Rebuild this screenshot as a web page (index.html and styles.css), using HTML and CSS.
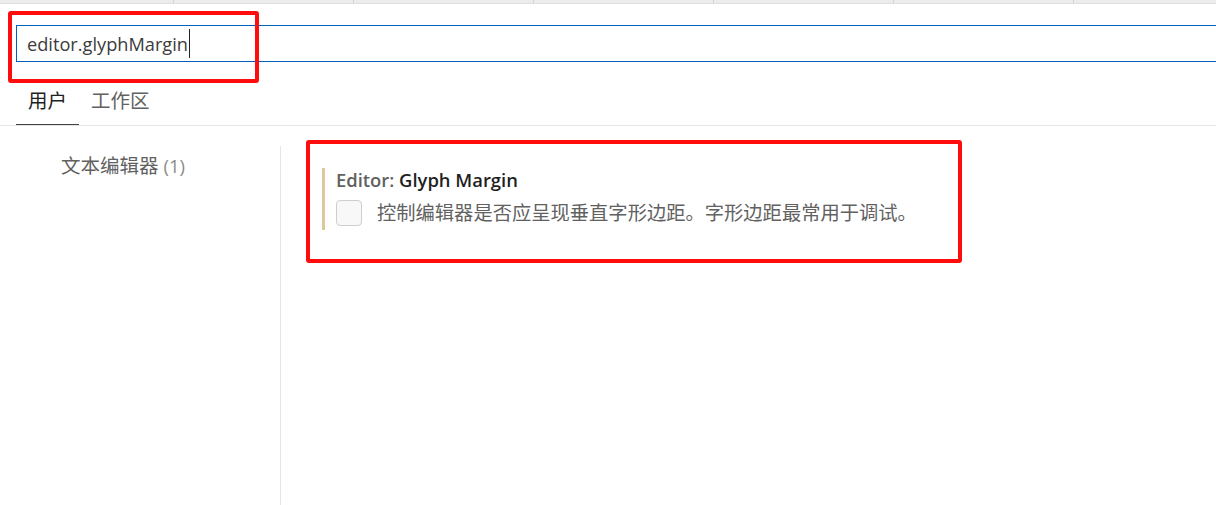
FILE: index.html
```html
<!DOCTYPE html>
<html lang="zh-CN">
<head>
    <meta charset="UTF-8">
    <title>设置</title>
    <link rel="stylesheet" href="styles.css">
</head>
<body>
    <div class="tab-strip">
        <div class="tab-cell first"></div>
        <div class="tab-cell"></div>
        <div class="tab-cell"></div>
        <div class="tab-cell"></div>
        <div class="tab-cell"></div>
        <div class="tab-cell"></div>
    </div>

    <div class="settings-page">
        <div class="search-box">
            <span class="search-text">editor.glyphMargin</span><span class="caret"></span>
        </div>

        <div class="scope-tabs">
            <div class="scope-tab active">用户</div>
            <div class="scope-tab">工作区</div>
        </div>

        <div class="settings-body">
            <div class="toc">
                <div class="toc-item">文本编辑器 <span class="count">(1)</span></div>
            </div>
            <div class="settings-list">
                <div class="setting">
                    <div class="setting-title"><span class="category">Editor: </span>Glyph Margin</div>
                    <div class="setting-row">
                        <span class="checkbox"></span>
                        <span class="setting-desc">控制编辑器是否应呈现垂直字形边距。字形边距最常用于调试。</span>
                    </div>
                </div>
            </div>
        </div>
    </div>

    <!-- 标注框 -->
    <div class="mark mark-search"></div>
    <div class="mark mark-setting"></div>
</body>
</html>
```

FILE: styles.css
```css
html, body {
    margin: 0;
    height: 100%;
    overflow: hidden;
}
body {
    font-family: 'Open Sans', 'Noto Sans CJK SC', sans-serif;
    font-size: 18px;
    color: #3b3b3b;
    background-color: #fff;
    position: relative;
}
.tab-strip {
    display: flex;
    height: 3px;
    background-color: #ececec;
    border-bottom: 1px solid #e0e0e0;
}
.tab-cell {
    width: 179px;
    flex-shrink: 0;
    border-right: 1px solid #d4d4d4;
}
.tab-cell.first {
    width: 173px;
}
.settings-page {
    padding-left: 16px;
}
.search-box {
    margin-top: 21px;
    height: 35px;
    border: 1px solid #005fb8;
    border-right: none;
    display: flex;
    align-items: center;
    padding-left: 10px;
    margin-right: -4px;
}
.search-text {
    color: #3b3b3b;
    font-size: 18.2px;
}
.caret {
    display: inline-block;
    width: 1px;
    height: 29px;
    background-color: #222;
    margin-left: 1px;
}
.scope-tabs {
    display: flex;
    margin-top: 13px;
    margin-left: -16px;
    padding-left: 16px;
    border-bottom: 1px solid #e5e5e5;
}
.scope-tab {
    height: 50px;
    line-height: 51px;
    padding: 0 12px;
    color: #616161;
    font-size: 19.5px;
}
.scope-tab.active {
    color: #1f1f1f;
    box-shadow: inset 0 -1px 0 #424242;
}
.settings-body {
    display: flex;
    margin-top: 20px;
    height: 360px;
}
.toc {
    width: 264px;
    border-right: 1px solid #e5e5e5;
    padding-top: 5px;
}
.toc-item {
    padding-left: 45px;
    line-height: 30px;
    font-size: 19.5px;
    color: #616161;
}
.toc-item .count {
    color: #8b8b8b;
    font-size: 18.5px;
}
.settings-list {
    padding-left: 41px;
    padding-top: 22px;
}
.setting {
    border-left: 3px solid #dfc89b;
    padding-left: 11px;
    padding-bottom: 4px;
}
.setting-title {
    line-height: 24px;
    font-size: 18.4px;
    font-weight: 600;
    color: #1f1f1f;
}
.setting-title .category {
    color: #616161;
}
.setting-row {
    display: flex;
    align-items: center;
    margin-top: 8px;
}
.checkbox {
    width: 24px;
    height: 24px;
    border: 1px solid #cecece;
    border-radius: 4px;
    background-color: #f8f8f8;
    margin-right: 15px;
}
.setting-desc {
    font-size: 19.3px;
    line-height: 26px;
    color: #616161;
}
.mark {
    position: absolute;
    border: 4px solid #ff0d0d;
    border-radius: 3px;
    box-sizing: border-box;
}
.mark-search {
    left: 8px;
    top: 11px;
    width: 251px;
    height: 72px;
}
.mark-setting {
    left: 306px;
    top: 140px;
    width: 656px;
    height: 123px;
}
```
